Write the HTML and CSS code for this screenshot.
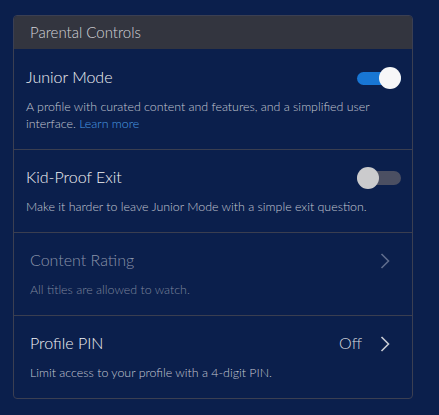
FILE: index.html
```html
<!DOCTYPE html>
<html lang="en">
<head>
    <meta charset="UTF-8">
    <meta name="viewport" content="width=device-width, initial-scale=1.0">
    <title>Parental Controls</title>
    <link rel="stylesheet" href="styles.css">
</head>
<body>
    <div class="panel">
        <div class="panel-header">Parental Controls</div>

        <div class="setting tight">
            <div class="setting-top">
                <span class="setting-title">Junior Mode</span>
                <span class="toggle on"><span class="knob"></span></span>
            </div>
            <p class="setting-desc">A profile with curated content and features, and a simplified user interface. <a href="#">Learn more</a></p>
        </div>

        <div class="setting tight">
            <div class="setting-top">
                <span class="setting-title">Kid-Proof Exit</span>
                <span class="toggle"><span class="knob"></span></span>
            </div>
            <p class="setting-desc">Make it harder to leave Junior Mode with a simple exit question.</p>
        </div>

        <div class="setting disabled">
            <div class="setting-top">
                <span class="setting-title">Content Rating</span>
                <svg class="chevron" width="10" height="16" viewBox="0 0 10 16"><polyline points="1.5,1 8.5,8 1.5,15" fill="none" stroke="currentColor" stroke-width="1.6"/></svg>
            </div>
            <p class="setting-desc">All titles are allowed to watch.</p>
        </div>

        <div class="setting">
            <div class="setting-top">
                <span class="setting-title">Profile PIN</span>
                <span class="setting-value">Off</span>
                <svg class="chevron" width="10" height="16" viewBox="0 0 10 16"><polyline points="1.5,1 8.5,8 1.5,15" fill="none" stroke="currentColor" stroke-width="1.6"/></svg>
            </div>
            <p class="setting-desc">Limit access to your profile with a 4-digit PIN.</p>
        </div>
    </div>
</body>
</html>
```

FILE: styles.css
```css
body {
    margin: 0;
    padding: 15px 26px 0 13px;
    font-family: 'Lato', sans-serif;
    font-weight: 300;
    background: #0b1f4c;
    min-height: 100vh;
    box-sizing: border-box;
    color: #f2f2f4;
}
.panel {
    width: 400px;
    box-sizing: border-box;
    border: 1px solid #3b3f52;
    border-radius: 4px;
    overflow: hidden;
}
.panel-header {
    background: #33353f;
    color: #d2d3d7;
    font-size: 15px;
    line-height: 33px;
    padding: 0 16px;
}
.setting {
    padding: 17px 22px 17px 16px;
    border-top: 1px solid #3a3e50;
}
.panel-header + .setting {
    border-top: none;
    padding-top: 18px;
}
.setting.tight {
    padding-right: 11px;
    padding-left: 12px;
}
.setting-top {
    display: flex;
    align-items: center;
    height: 22px;
}
.setting-title {
    flex: 1;
    font-size: 16px;
    margin-bottom: 3px;
}
.setting-value {
    font-size: 16px;
    color: #d4d6dc;
    margin: 0 18px 3px 0;
}
.chevron {
    color: #c9ccd4;
}
.setting-desc {
    margin: 9px 0 0;
    font-size: 12.4px;
    line-height: 17px;
    color: #c3c7d2;
}
.setting-desc a {
    color: #4a9ce2;
    text-decoration: none;
}
.disabled .setting-title {
    color: #8a93a9;
}
.disabled .setting-desc {
    color: #7d869c;
}
.disabled .chevron {
    color: #5f6c8c;
}
.toggle {
    position: relative;
    width: 44px;
    height: 14px;
    border-radius: 7px;
    background: #4b4f62;
}
.toggle .knob {
    position: absolute;
    left: 0;
    top: -4px;
    width: 22px;
    height: 22px;
    border-radius: 50%;
    background: #cbcbcd;
}
.toggle.on {
    background: #1876d4;
    height: 13px;
}
.toggle.on .knob {
    left: auto;
    right: 0;
    top: -5px;
    background: #f7f7f8;
}
```
